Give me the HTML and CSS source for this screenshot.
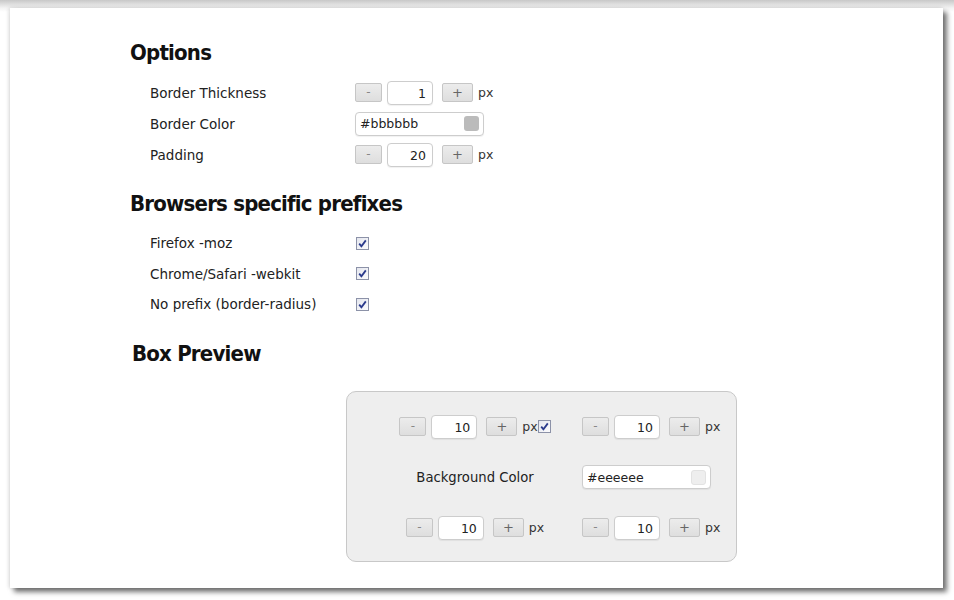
FILE: index.html
```html
<!DOCTYPE html>
<html>
<head>
<meta charset="utf-8">
<link rel="stylesheet" href="styles.css">
</head>
<body>
<div class="window">
  <h2 class="heading">Options</h2>
  <div class="form">
    <div class="row">
      <span class="label">Border Thickness</span>
      <div class="stepper">
        <button class="btn">-</button><span class="num">1</span><button class="btn plus">+</button><span class="unit">px</span>
      </div>
    </div>
    <div class="row">
      <span class="label">Border Color</span>
      <div class="color"><span class="hex">#bbbbbb</span><span class="swatch sw-b"></span></div>
    </div>
    <div class="row">
      <span class="label">Padding</span>
      <div class="stepper">
        <button class="btn">-</button><span class="num">20</span><button class="btn plus">+</button><span class="unit">px</span>
      </div>
    </div>
  </div>

  <h2 class="heading h-second">Browsers specific prefixes</h2>
  <div class="form checks">
    <div class="row crow"><span class="label">Firefox -moz</span><span class="check"><svg viewBox="0 0 13 13" width="13" height="13"><path d="M3.2 6.6 L5.4 9.2 L9.8 3.4" fill="none" stroke="#2a3a8c" stroke-width="1.8"/></svg></span></div>
    <div class="row crow"><span class="label">Chrome/Safari -webkit</span><span class="check"><svg viewBox="0 0 13 13" width="13" height="13"><path d="M3.2 6.6 L5.4 9.2 L9.8 3.4" fill="none" stroke="#2a3a8c" stroke-width="1.8"/></svg></span></div>
    <div class="row crow"><span class="label">No prefix (border-radius)</span><span class="check"><svg viewBox="0 0 13 13" width="13" height="13"><path d="M3.2 6.6 L5.4 9.2 L9.8 3.4" fill="none" stroke="#2a3a8c" stroke-width="1.8"/></svg></span></div>
  </div>

  <h2 class="heading h-third">Box Preview</h2>
  <div class="preview-wrap">
    <div class="preview">
      <div class="cell left">
        <div class="stepper">
          <button class="btn">-</button><span class="num">10</span><button class="btn plus">+</button><span class="unit tight">px</span><span class="check"><svg viewBox="0 0 13 13" width="13" height="13"><path d="M3.2 6.6 L5.4 9.2 L9.8 3.4" fill="none" stroke="#2a3a8c" stroke-width="1.8"/></svg></span>
        </div>
      </div>
      <div class="cell right">
        <div class="stepper">
          <button class="btn">-</button><span class="num">10</span><button class="btn plus">+</button><span class="unit">px</span>
        </div>
      </div>
      <div class="cell left"><span class="label">Background Color</span></div>
      <div class="cell right">
        <div class="color"><span class="hex">#eeeeee</span><span class="swatch sw-e"></span></div>
      </div>
      <div class="cell left">
        <div class="stepper">
          <button class="btn">-</button><span class="num">10</span><button class="btn plus">+</button><span class="unit">px</span>
        </div>
      </div>
      <div class="cell right">
        <div class="stepper">
          <button class="btn">-</button><span class="num">10</span><button class="btn plus">+</button><span class="unit">px</span>
        </div>
      </div>
    </div>
  </div>
</div>
</body>
</html>
```

FILE: styles.css
```css
html, body {
  margin: 0;
  padding: 0;
  background: #ffffff;
}
body {
  padding: 8px 11px 12px 10px;
  height: 600px;
  box-sizing: border-box;
  background: linear-gradient(to bottom, #c8c8c8 0px, #f4f4f4 8px, #ffffff 12px);
}
.window {
  background: #ffffff;
  height: 580px;
  box-sizing: border-box;
  padding: 31px 0 0 120px;
  box-shadow: 4px 4px 5px rgba(0,0,0,0.55), -1px 0 4px rgba(0,0,0,0.15);
  font-family: "DejaVu Sans", Verdana, sans-serif;
  color: #222222;
}
.heading {
  margin: 0;
  font-family: "DejaVu Sans Condensed", "DejaVu Sans", sans-serif;
  font-weight: bold;
  font-size: 22px;
  line-height: 28px;
  color: #111111;
  letter-spacing: -0.8px;
}
.h-second { margin-top: 20px; }
.h-third { margin-top: 20px; margin-left: 2px; }
.form {
  margin-top: 10px;
  padding-left: 20px;
}
.row {
  display: flex;
  align-items: center;
  height: 31px;
}
.crow { height: 30.5px; }
.label {
  font-size: 13.5px;
  color: #222222;
}
.form .label {
  width: 205px;
  flex: none;
}
.stepper {
  display: flex;
  align-items: center;
}
.btn {
  width: 27px;
  height: 19px;
  padding: 0;
  margin: 0;
  border: 1px solid #c6c6c6;
  border-radius: 2px;
  background: linear-gradient(to bottom, #ececec, #dedede);
  color: #888888;
  font-family: "DejaVu Sans", sans-serif;
  font-size: 12px;
  line-height: 17px;
  box-sizing: border-box;
}
.btn.plus {
  width: 31px;
  color: #666666;
  font-size: 13px;
}
.num {
  display: block;
  width: 46px;
  height: 24px;
  box-sizing: border-box;
  margin: 0 9px 0 5px;
  border: 1px solid #cdcdcd;
  border-radius: 4px;
  background: #ffffff;
  box-shadow: 0 1px 1px rgba(0,0,0,0.06);
  font-size: 12.5px;
  line-height: 24px;
  text-align: right;
  padding-right: 6px;
  color: #222222;
}
.unit {
  font-size: 12.5px;
  margin-left: 5px;
  color: #333333;
}
.unit.tight { margin-right: 0; }
.color {
  display: flex;
  align-items: center;
  justify-content: space-between;
  width: 129px;
  height: 24px;
  box-sizing: border-box;
  border: 1px solid #cdcdcd;
  border-radius: 4px;
  background: #ffffff;
  padding: 0 4px 0 4px;
  box-shadow: 0 1px 1px rgba(0,0,0,0.06);
}
.hex {
  font-size: 12.5px;
  color: #222222;
}
.swatch {
  width: 15px;
  height: 15px;
  border-radius: 3px;
  box-sizing: border-box;
}
.sw-b { background: #bbbbbb; }
.sw-e { background: #eeeeee; border: 1px solid #e2e2e2; }
.check {
  display: block;
  width: 13px;
  height: 13px;
  box-sizing: border-box;
  border: 1px solid #8c92a8;
  background: linear-gradient(135deg, #e4e6ee, #fbfbfd);
  flex: none;
}
.check svg {
  display: block;
  margin: -1px;
}
.crow .check { margin-left: 1px; }
.preview-wrap {
  margin-top: 23px;
  padding-left: 216px;
}
.preview {
  width: 391px;
  height: 171px;
  box-sizing: border-box;
  background: #eeeeee;
  border: 1px solid #c8c8c8;
  border-radius: 10px;
  display: grid;
  grid-template-columns: 176px auto;
  grid-template-rows: 50px 51px 50px;
  column-gap: 19px;
  padding: 10px 0 0 40px;
}
.cell {
  display: flex;
  align-items: center;
}
.cell.left { justify-content: center; }
.cell.right { justify-content: flex-start; }
.preview .label { font-size: 13.2px; }
```
